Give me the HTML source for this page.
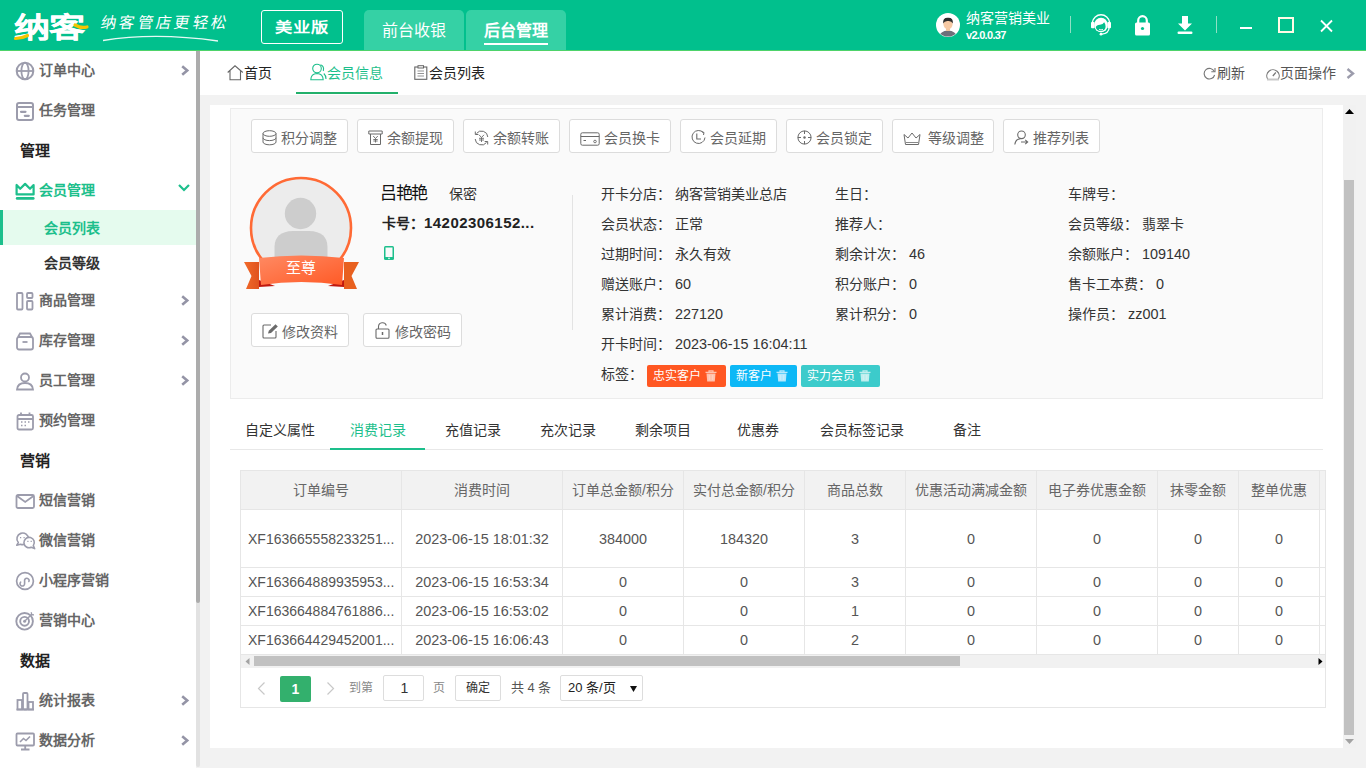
<!DOCTYPE html>
<html lang="zh-CN"><head><meta charset="utf-8">
<style>
*{box-sizing:border-box;margin:0;padding:0}
html,body{width:1366px;height:768px;overflow:hidden}
body{position:relative;background:#f2f2f2;font-family:"Liberation Sans",sans-serif;font-size:14px;color:#333}
.a{position:absolute;white-space:nowrap}
svg{display:block}
/* header */
#hdr{z-index:5;position:absolute;left:0;top:0;width:1366px;height:51px;background:#01c08d;border-bottom:1px solid #4ed36a}
/* sidebar */
#side{position:absolute;left:0;top:0;width:196px;height:768px;background:#fff}
#sbar{position:absolute;left:196px;top:51px;width:4px;height:716px;background:#e2e2e2;border-radius:2px}
.si{position:absolute;left:0;width:196px;height:40px}
.si .t{position:absolute;left:39px;top:10px;line-height:20px;font-size:14px;font-weight:bold;color:#666}
.si .ic{position:absolute;left:15px;top:11px}
.si .ch{position:absolute;left:179px;top:14px}
.sh{position:absolute;left:20px;font-size:15px;font-weight:bold;color:#222;line-height:20px}
/* tabbar */
#tabbar{position:absolute;left:200px;top:51px;width:1166px;height:44px;background:#fff}
/* panel */
#panel{position:absolute;left:210px;top:105px;width:1133px;height:643px;background:#fff}
#vscroll{position:absolute;left:1343px;top:105px;width:13px;height:643px;background:#f1f1f1}
#info{position:absolute;left:230px;top:108px;width:1093px;height:291px;background:#fafafa;border:1px solid #ececec}
.btn{position:absolute;top:119px;height:34px;background:#fff;border:1px solid #dcdcdc;border-radius:3px}
.btn .ic{position:absolute;left:10px;top:10px}
.btn .t{position:absolute;top:7px;line-height:20px;color:#666;font-size:14px}
.lb{position:absolute;line-height:20px;color:#333;font-size:14px;white-space:nowrap}
.tag{position:absolute;top:365px;height:22px;border-radius:2px;color:#fff;font-size:12px;line-height:22px}
.tag .t{position:absolute;left:6px;top:0}
.tag svg{position:absolute;top:4px}
.st{position:absolute;top:420px;line-height:20px;font-size:14px;color:#333}
/* table */
#tbl{position:absolute;left:240px;top:470px;width:1086px;height:238px;border:1px solid #e6e6e6;background:#fff}
.th{position:absolute;top:0;height:39px;background:#f2f2f2;border-right:1px solid #e6e6e6;border-bottom:1px solid #e6e6e6;color:#666;line-height:39px;text-align:center}
.td{position:absolute;border-right:1px solid #e6e6e6;border-bottom:1px solid #e6e6e6;color:#555;text-align:center;overflow:hidden;font-size:14.4px}
</style></head><body>
<div id="hdr">
<div class="a" style="left:14px;top:5px;font-size:34px;line-height:44px;font-weight:bold;color:#fff;letter-spacing:-1px;font-family:'Liberation Serif',serif;-webkit-text-stroke:0.3px #fff;transform:scale(1.06,0.84);transform-origin:0 36px">纳客</div>
<svg class="a" style="left:14px;top:27px;overflow:visible" width="78" height="16"><path d="M1.5 11.5 Q8 11.5 13.5 8.5" stroke="#f5c400" stroke-width="3.2" fill="none" stroke-linecap="round"/><path d="M61 -2 Q67 1.5 73 0" stroke="#f5c400" stroke-width="3.2" fill="none" stroke-linecap="round"/></svg>
<div class="a" style="left:101px;top:11px;font-size:15.5px;line-height:24px;color:#fff;letter-spacing:2.3px;transform:skewX(-10deg)">纳客管店更轻松</div>
<svg class="a" style="left:100px;top:30px" width="125" height="14"><path d="M3 10.5 Q55 2 118 11" stroke="#fff" stroke-width="1.3" fill="none" opacity=".9"/></svg>
<div class="a" style="left:261px;top:10px;width:82px;height:34px;border:1px solid #fff;border-radius:3px;color:#fff;font-weight:bold;font-size:16px;line-height:32px;text-align:center;font-family:'Liberation Serif',serif"><span style="display:inline-block;transform:translateY(1px) scale(1.08,0.85);letter-spacing:0.5px">美业版</span></div>
<div class="a" style="left:364px;top:10px;width:100px;height:40px;background:#35d1a5;border-radius:5px 5px 0 0;color:#fff;font-size:16px;line-height:42px;text-align:center">前台收银</div>
<div class="a" style="left:466px;top:10px;width:100px;height:40px;background:#35d1a5;border-radius:5px 5px 0 0;color:#fff;font-size:16px;font-weight:bold;line-height:42px;text-align:center;font-family:'Liberation Serif',serif">后台管理</div>
<div class="a" style="left:484px;top:43px;width:64px;height:2px;background:#fff"></div>
<svg class="a" style="left:936px;top:13px" width="24" height="24" viewBox="0 0 24 24"><circle cx="12" cy="12" r="12" fill="#fff"/><clipPath id="cav"><circle cx="12" cy="12" r="11.5"/></clipPath><g clip-path="url(#cav)"><path d="M3 24 Q4 18 12 17.5 Q20 18 21 24Z" fill="#6e6f7a"/><rect x="10" y="14" width="4" height="4" fill="#f2c6a0"/><ellipse cx="12" cy="11" rx="4.6" ry="5.2" fill="#f6c9a4"/><path d="M7.2 10.5 Q6.5 4.5 12 4.8 Q17.5 4.5 16.8 10.5 Q15.5 7.6 12 8 Q8.5 7.6 7.2 10.5Z" fill="#2d2d2d"/></g></svg>
<div class="a" style="left:966px;top:8px;font-size:14px;line-height:20px;color:#fff">纳客营销美业</div>
<div class="a" style="left:966px;top:28px;font-size:11px;line-height:15px;color:#fff;font-weight:bold;letter-spacing:-0.7px">v2.0.0.37</div>
<div class="a" style="left:1070px;top:16px;width:1px;height:17px;background:#8fe0c5"></div>
<svg class="a" style="left:1086px;top:10px" width="30" height="30" viewBox="0 0 30 30"><path d="M6.3 12.5 A8.8 9.2 0 0 1 23.7 12.5" stroke="#fff" stroke-width="1.4" fill="none"/><rect x="5" y="12" width="3.6" height="6.3" rx="1" fill="#fff"/><rect x="21.4" y="12" width="3.6" height="6.3" rx="1" fill="#fff"/><ellipse cx="15" cy="15" rx="6.8" ry="7.3" fill="#fff"/><path d="M9.8 17.2 Q10.3 15.3 14 14.8 Q17 14.3 18.2 12.2 Q19.6 13.8 19.6 16.8 Q19.4 20.8 15 21 Q10.2 20.8 9.8 17.2Z" fill="#01c08d"/><path d="M13 19.3 Q15 20.5 17 19.3" stroke="#fff" stroke-width="0.9" fill="none"/><path d="M23.2 17.5 Q22.8 23.5 15.8 24.2" stroke="#fff" stroke-width="1.3" fill="none"/><circle cx="15" cy="24.2" r="1.4" fill="#fff"/></svg>
<svg class="a" style="left:1134px;top:15px" width="17" height="21" viewBox="0 0 17 21"><path d="M4.2 8 V5.5 A4.3 4.3 0 0 1 12.8 5.5 V8" stroke="#fff" stroke-width="2.2" fill="none"/><rect x="1" y="7.5" width="15" height="13" rx="1.5" fill="#fff"/><circle cx="8.5" cy="13.5" r="1.6" fill="#01c08d"/></svg>
<svg class="a" style="left:1177px;top:15px" width="16" height="20" viewBox="0 0 16 20"><path d="M5 1 H11 V8.5 H15 L8 15.5 L1 8.5 H5Z" fill="#fff"/><rect x="0.5" y="16.5" width="15" height="2.5" rx="1.2" fill="#fff"/></svg>
<div class="a" style="left:1216px;top:16px;width:1px;height:17px;background:#8fe0c5"></div>
<div class="a" style="left:1240px;top:27px;width:12px;height:2px;background:#fff"></div>
<div class="a" style="left:1278px;top:17px;width:16px;height:16px;border:2px solid #fffbe6"></div>
<svg class="a" style="left:1320px;top:19px" width="13" height="14" viewBox="0 0 13 14"><path d="M1 1.5 L12 12.5 M12 1.5 L1 12.5" stroke="#fff" stroke-width="1.8"/></svg>
</div>
<div id="side">
<div class="a" style="left:15px;top:61px"><svg width="20" height="20" viewBox="0 0 20 20"><circle cx="10" cy="10" r="8.3" stroke="#9c9cac" stroke-width="2" fill="none"/><ellipse cx="10" cy="10" rx="3.6" ry="8.3" stroke="#9c9cac" stroke-width="1.8" fill="none"/><path d="M2 10 H18" stroke="#9c9cac" stroke-width="1.8"/></svg></div>
<div class="a" style="left:39px;top:61px;font-size:14px;line-height:20px;font-weight:bold;color:#666;font-family:'Liberation Serif',serif">订单中心</div>
<svg class="a" style="left:180px;top:65px" width="10" height="11" viewBox="0 0 10 11"><path d="M2.2 1.3 L7.2 5.5 L2.2 9.7" stroke="#9494a6" stroke-width="2.6" fill="none"/></svg>
<div class="a" style="left:15px;top:101px"><svg width="20" height="20" viewBox="0 0 20 20"><rect x="2" y="2" width="16" height="17" rx="2" stroke="#9c9cac" stroke-width="2" fill="none"/><path d="M2 6 H18" stroke="#9c9cac" stroke-width="2"/><path d="M6 10.8 H10.5 M9.8 14.8 H13.8" stroke="#9c9cac" stroke-width="2.2" stroke-linecap="round"/></svg></div>
<div class="a" style="left:39px;top:101px;font-size:14px;line-height:20px;font-weight:bold;color:#666;font-family:'Liberation Serif',serif">任务管理</div>
<div class="a" style="left:20px;top:141px;font-size:15px;line-height:20px;font-weight:bold;color:#222;font-family:'Liberation Serif',serif">管理</div>
<div class="a" style="left:15px;top:182px"><svg width="20" height="20" viewBox="0 0 20 20"><path d="M1.6 3 V12.4 H18.6 V3 L15 6.8 L10.1 1.9 L5.2 6.8 Z" stroke="#1dbf8c" stroke-width="2.2" fill="none" stroke-linejoin="round"/><rect x="0.8" y="15" width="18.8" height="2.8" rx="1.4" fill="#1dbf8c"/></svg></div>
<div class="a" style="left:39px;top:181px;font-size:14px;line-height:20px;font-weight:bold;color:#1dbf8c;font-family:'Liberation Serif',serif">会员管理</div>
<div class="a" style="left:0;top:210px;width:196px;height:35px;background:#e5fbee"></div><div class="a" style="left:0;top:210px;width:3px;height:35px;background:#1dbf8c"></div>
<div class="a" style="left:44px;top:219px;font-size:14px;line-height:20px;font-weight:bold;color:#1dbf8c;font-family:'Liberation Serif',serif">会员列表</div>
<div class="a" style="left:44px;top:254px;font-size:14px;line-height:20px;font-weight:bold;color:#333;font-family:'Liberation Serif',serif">会员等级</div>
<div class="a" style="left:15px;top:291px"><svg width="20" height="20" viewBox="0 0 20 20"><rect x="2" y="2" width="5.5" height="16.5" rx="1" stroke="#9c9cac" stroke-width="1.8" fill="none"/><rect x="12" y="2" width="5.5" height="5" rx="1" stroke="#9c9cac" stroke-width="1.8" fill="none"/><rect x="12" y="10" width="5.5" height="8.5" rx="1" stroke="#9c9cac" stroke-width="1.8" fill="none"/></svg></div>
<div class="a" style="left:39px;top:291px;font-size:14px;line-height:20px;font-weight:bold;color:#666;font-family:'Liberation Serif',serif">商品管理</div>
<svg class="a" style="left:180px;top:295px" width="10" height="11" viewBox="0 0 10 11"><path d="M2.2 1.3 L7.2 5.5 L2.2 9.7" stroke="#9494a6" stroke-width="2.6" fill="none"/></svg>
<div class="a" style="left:15px;top:331px"><svg width="20" height="20" viewBox="0 0 20 20"><path d="M3 6 L5 2.5 H15 L17 6" stroke="#9c9cac" stroke-width="1.8" fill="none"/><rect x="2" y="6" width="16" height="12.5" rx="2" stroke="#9c9cac" stroke-width="1.8" fill="none"/><path d="M7.5 11 H12.5" stroke="#9c9cac" stroke-width="1.8"/></svg></div>
<div class="a" style="left:39px;top:331px;font-size:14px;line-height:20px;font-weight:bold;color:#666;font-family:'Liberation Serif',serif">库存管理</div>
<svg class="a" style="left:180px;top:335px" width="10" height="11" viewBox="0 0 10 11"><path d="M2.2 1.3 L7.2 5.5 L2.2 9.7" stroke="#9494a6" stroke-width="2.6" fill="none"/></svg>
<div class="a" style="left:15px;top:371px"><svg width="20" height="20" viewBox="0 0 20 20"><circle cx="10" cy="6.5" r="4" stroke="#9c9cac" stroke-width="1.8" fill="none"/><path d="M2 18.5 Q2.5 12 10 12 Q17.5 12 18 18.5Z" stroke="#9c9cac" stroke-width="1.8" fill="none"/></svg></div>
<div class="a" style="left:39px;top:371px;font-size:14px;line-height:20px;font-weight:bold;color:#666;font-family:'Liberation Serif',serif">员工管理</div>
<svg class="a" style="left:180px;top:375px" width="10" height="11" viewBox="0 0 10 11"><path d="M2.2 1.3 L7.2 5.5 L2.2 9.7" stroke="#9494a6" stroke-width="2.6" fill="none"/></svg>
<div class="a" style="left:15px;top:411px"><svg width="20" height="20" viewBox="0 0 20 20"><rect x="2.5" y="4" width="15.5" height="14.5" rx="1.5" stroke="#9c9cac" stroke-width="1.8" fill="none"/><path d="M2.5 8 H18" stroke="#9c9cac" stroke-width="2"/><path d="M6 1.5 V5 M14.5 1.5 V5" stroke="#9c9cac" stroke-width="1.8"/><path d="M6 11 h1.5 M9.5 11 h1.5 M13 11 h1.5 M6 14.5 h1.5 M9.5 14.5 h1.5" stroke="#9c9cac" stroke-width="1.5"/></svg></div>
<div class="a" style="left:39px;top:411px;font-size:14px;line-height:20px;font-weight:bold;color:#666;font-family:'Liberation Serif',serif">预约管理</div>
<div class="a" style="left:20px;top:451px;font-size:15px;line-height:20px;font-weight:bold;color:#222;font-family:'Liberation Serif',serif">营销</div>
<div class="a" style="left:15px;top:491px"><svg width="20" height="20" viewBox="0 0 20 20"><rect x="1.5" y="4" width="17.5" height="13" rx="1.5" stroke="#9c9cac" stroke-width="1.8" fill="none"/><path d="M2 5 L10.2 11 L18.5 5" stroke="#9c9cac" stroke-width="1.8" fill="none"/></svg></div>
<div class="a" style="left:39px;top:491px;font-size:14px;line-height:20px;font-weight:bold;color:#666;font-family:'Liberation Serif',serif">短信营销</div>
<div class="a" style="left:15px;top:531px"><svg width="21" height="20" viewBox="0 0 21 20"><path d="M1.8 14.2 L3.3 11.6 A5.8 5.8 0 1 1 5.5 13.2 Z" stroke="#9c9cac" stroke-width="1.6" fill="#fff" stroke-linejoin="round"/><path d="M5 6.6 h1.2 M8.5 6.6 h1.2" stroke="#9c9cac" stroke-width="1.3"/><path d="M19.6 17.6 L18.3 14.6 A5.2 5.2 0 1 0 16.2 16.3 Z" stroke="#9c9cac" stroke-width="1.6" fill="#fff" stroke-linejoin="round"/><path d="M12.3 10.3 h1.2 M15.6 10.3 h1.2" stroke="#9c9cac" stroke-width="1.3"/></svg></div>
<div class="a" style="left:39px;top:531px;font-size:14px;line-height:20px;font-weight:bold;color:#666;font-family:'Liberation Serif',serif">微信营销</div>
<div class="a" style="left:15px;top:571px"><svg width="20" height="20" viewBox="0 0 20 20"><circle cx="10" cy="10" r="8.4" stroke="#9c9cac" stroke-width="1.7" fill="none"/><path d="M5.6 11.2 A2.3 2.3 0 1 0 9.6 12.6 V8.9 A2.3 2.3 0 1 1 13.9 10.5" stroke="#9c9cac" stroke-width="1.6" fill="none" stroke-linecap="round"/></svg></div>
<div class="a" style="left:39px;top:571px;font-size:14px;line-height:20px;font-weight:bold;color:#666;font-family:'Liberation Serif',serif">小程序营销</div>
<div class="a" style="left:15px;top:611px"><svg width="20" height="20" viewBox="0 0 20 20"><circle cx="9.6" cy="10.3" r="8.3" stroke="#9c9cac" stroke-width="1.9" fill="none"/><circle cx="9.6" cy="10.3" r="4.4" stroke="#9c9cac" stroke-width="1.9" fill="none"/><circle cx="9.6" cy="10.3" r="1.5" fill="#9c9cac"/><path d="M9.6 10.3 L16.8 3.2" stroke="#9c9cac" stroke-width="1.5"/><path d="M15.6 1.2 L17 1.2 L17.2 3 L19 3.2 L19 4.6 L16.2 4.4Z" fill="#9c9cac"/></svg></div>
<div class="a" style="left:39px;top:611px;font-size:14px;line-height:20px;font-weight:bold;color:#666;font-family:'Liberation Serif',serif">营销中心</div>
<div class="a" style="left:20px;top:651px;font-size:15px;line-height:20px;font-weight:bold;color:#222;font-family:'Liberation Serif',serif">数据</div>
<div class="a" style="left:15px;top:691px"><svg width="20" height="20" viewBox="0 0 20 20"><path d="M1.5 18.5 H19" stroke="#9c9cac" stroke-width="1.8"/><rect x="2.5" y="9" width="4.5" height="9.5" stroke="#9c9cac" stroke-width="1.8" fill="none"/><rect x="8" y="2" width="4.5" height="16.5" rx="1" stroke="#9c9cac" stroke-width="1.8" fill="none"/><rect x="13.5" y="11" width="4.5" height="7.5" stroke="#9c9cac" stroke-width="1.8" fill="none"/></svg></div>
<div class="a" style="left:39px;top:691px;font-size:14px;line-height:20px;font-weight:bold;color:#666;font-family:'Liberation Serif',serif">统计报表</div>
<svg class="a" style="left:180px;top:695px" width="10" height="11" viewBox="0 0 10 11"><path d="M2.2 1.3 L7.2 5.5 L2.2 9.7" stroke="#9494a6" stroke-width="2.6" fill="none"/></svg>
<div class="a" style="left:15px;top:731px"><svg width="20" height="20" viewBox="0 0 20 20"><rect x="1.5" y="2.5" width="17.5" height="12" rx="1" stroke="#9c9cac" stroke-width="1.8" fill="none"/><path d="M5 11 L8.5 7.5 L11 9.5 L15 5.5" stroke="#9c9cac" stroke-width="1.6" fill="none"/><path d="M10.2 14.5 V18.5 M6 18.5 H14.5" stroke="#9c9cac" stroke-width="1.8"/></svg></div>
<div class="a" style="left:39px;top:731px;font-size:14px;line-height:20px;font-weight:bold;color:#666;font-family:'Liberation Serif',serif">数据分析</div>
<svg class="a" style="left:180px;top:735px" width="10" height="11" viewBox="0 0 10 11"><path d="M2.2 1.3 L7.2 5.5 L2.2 9.7" stroke="#9494a6" stroke-width="2.6" fill="none"/></svg>
<svg class="a" style="left:178px;top:184px" width="12" height="8" viewBox="0 0 12 8"><path d="M1 1 L6 6 L11 1" stroke="#1dbf8c" stroke-width="2.2" fill="none"/></svg>
</div>
<div id="sbar"><div class="a" style="left:0;top:0;width:4px;height:552px;background:#acacac;border-radius:0 0 2px 2px"></div></div>
<div id="tabbar">
<svg class="a" style="left:27px;top:14px" width="17" height="16" viewBox="0 0 17 16"><path d="M0.7 7.5 L8 0.8 L15.8 7.5 M3 6 V14.8 H13.5 V6" stroke="#666" stroke-width="1.1" fill="none"/></svg>
<div class="a" style="left:44px;top:12px;line-height:20px;color:#222">首页</div>
<svg class="a" style="left:110px;top:12px" width="17" height="18" viewBox="0 0 17 18"><circle cx="7" cy="5.5" r="4.3" stroke="#1dbf8c" stroke-width="1.1" fill="none"/><path d="M0.8 16.8 Q1 10.8 7 10.5 Q13 10.8 13.2 16.8Z" stroke="#1dbf8c" stroke-width="1.1" fill="none"/><path d="M10.5 1.8 Q14.5 3 13.3 8 M13.8 10.5 Q16 12.5 16 16" stroke="#1dbf8c" stroke-width="1.1" fill="none"/></svg>
<div class="a" style="left:127px;top:12px;line-height:20px;color:#1dbf8c">会员信息</div>
<div class="a" style="left:96px;top:41px;width:102px;height:2px;background:#22b06b"></div>
<svg class="a" style="left:214px;top:14px" width="14" height="15" viewBox="0 0 14 15"><rect x="0.8" y="2" width="12" height="12.3" stroke="#666" stroke-width="1.1" fill="none"/><rect x="4" y="0.7" width="5.5" height="2.3" stroke="#666" stroke-width="1" fill="#fff"/><path d="M3.5 6 H10 M3.5 8.5 H10 M3.5 11 H10" stroke="#888" stroke-width="0.9"/></svg>
<div class="a" style="left:229px;top:12px;line-height:20px;color:#222">会员列表</div>
<svg class="a" style="left:1003px;top:16px" width="13" height="13" viewBox="0 0 13 13"><path d="M11.3 4.5 A5.3 5.3 0 1 0 11.6 8" stroke="#777" stroke-width="1.1" fill="none"/><path d="M12 1 V4.8 H8.3" stroke="#777" stroke-width="1.1" fill="none"/></svg>
<div class="a" style="left:1017px;top:12px;line-height:20px;color:#555">刷新</div>
<svg class="a" style="left:1066px;top:16px" width="14" height="14" viewBox="0 0 14 14"><path d="M1.8 12.3 A6.2 6.2 0 1 1 12.2 12.3" stroke="#777" stroke-width="1.1" fill="none"/><path d="M6.8 9 L9.8 5.5" stroke="#777" stroke-width="1.2"/><path d="M1 12.5 H13" stroke="#c8c8c8" stroke-width="2"/></svg>
<div class="a" style="left:1080px;top:12px;line-height:20px;color:#555">页面操作</div>
<svg class="a" style="left:1146px;top:17px" width="9" height="11" viewBox="0 0 9 11"><path d="M1.5 1 L7 5.5 L1.5 10" stroke="#9c9cac" stroke-width="2.4" fill="none"/></svg>
</div>
<div id="panel"></div>
<div id="info"></div>
<div class="btn" style="left:251px;width:97px"><div class="a" style="left:10px;top:10px"><svg width="15" height="16" viewBox="0 0 15 16"><ellipse cx="7.5" cy="3.5" rx="6.5" ry="2.8" stroke="#6a6a6a" stroke-width="1" fill="none"/><path d="M1 3.5 V12 A6.5 2.8 0 0 0 14 12 V3.5 M1 7.8 A6.5 2.8 0 0 0 14 7.8" stroke="#6a6a6a" stroke-width="1" fill="none"/></svg></div><div class="a" style="left:29px;top:8px;line-height:20px;color:#666">积分调整</div></div>
<div class="btn" style="left:357px;width:97px"><div class="a" style="left:10px;top:10px"><svg width="15" height="16" viewBox="0 0 15 16"><path d="M0.8 1 H14.2 V4 H0.8Z M2.5 4 V14.5 H12.5 V4" stroke="#6a6a6a" stroke-width="1" fill="none"/><path d="M5.2 6 L7.5 8.5 L9.8 6 M7.5 8.5 V12.5 M5.3 9.5 H9.7 M5.3 11 H9.7" stroke="#6a6a6a" stroke-width="0.9" fill="none"/></svg></div><div class="a" style="left:29px;top:8px;line-height:20px;color:#666">余额提现</div></div>
<div class="btn" style="left:463px;width:97px"><div class="a" style="left:10px;top:10px"><svg width="15" height="16" viewBox="0 0 15 16"><path d="M13.8 7 A6.3 6.3 0 0 0 2.5 3.5 M1.2 9 A6.3 6.3 0 0 0 12.5 12.5" stroke="#6a6a6a" stroke-width="1" fill="none"/><path d="M1.3 1.5 V4.5 H4.3 M13.7 14.5 V11.5 H10.7" stroke="#6a6a6a" stroke-width="1" fill="none"/><path d="M5 4.8 L7.5 7.5 L10 4.8 M7.5 7.5 V12 M5 8.3 H10 M5 10 H10" stroke="#6a6a6a" stroke-width="0.9" fill="none"/></svg></div><div class="a" style="left:29px;top:8px;line-height:20px;color:#666">余额转账</div></div>
<div class="btn" style="left:569px;width:102px"><div class="a" style="left:10px;top:12px"><svg width="20" height="14" viewBox="0 0 20 14"><rect x="0.8" y="0.8" width="18.4" height="12.4" rx="1.5" stroke="#6a6a6a" stroke-width="1" fill="none"/><path d="M0.8 4.5 H19.2 M3.5 8.5 H6" stroke="#6a6a6a" stroke-width="1"/><circle cx="15" cy="9.5" r="1.3" stroke="#6a6a6a" stroke-width="0.9" fill="none"/></svg></div><div class="a" style="left:34px;top:8px;line-height:20px;color:#666">会员换卡</div></div>
<div class="btn" style="left:680px;width:97px"><div class="a" style="left:10px;top:10px"><svg width="15" height="15" viewBox="0 0 15 15"><path d="M12.5 2.8 A6.5 6.5 0 1 0 14 7.5" stroke="#6a6a6a" stroke-width="1" fill="none"/><path d="M5.8 3.5 V9 H10" stroke="#6a6a6a" stroke-width="1.1" fill="none"/><path d="M10.5 1.5 L13 2.5 L12.5 5" stroke="#6a6a6a" stroke-width="1" fill="none"/></svg></div><div class="a" style="left:29px;top:8px;line-height:20px;color:#666">会员延期</div></div>
<div class="btn" style="left:786px;width:97px"><div class="a" style="left:10px;top:10px"><svg width="15" height="15" viewBox="0 0 15 15"><circle cx="7.5" cy="7.5" r="6.6" stroke="#6a6a6a" stroke-width="1" fill="none"/><path d="M7.5 0.8 V4 M7.5 11 V14.2 M0.8 7.5 H4 M11 7.5 H14.2" stroke="#6a6a6a" stroke-width="1"/><circle cx="7.5" cy="7.5" r="1.2" fill="#6a6a6a"/></svg></div><div class="a" style="left:29px;top:8px;line-height:20px;color:#666">会员锁定</div></div>
<div class="btn" style="left:892px;width:102px"><div class="a" style="left:10px;top:12px"><svg width="18" height="14" viewBox="0 0 18 14"><path d="M1 2.5 L5 6 L9 1 L13 6 L17 2.5 L15.5 12.5 H2.5Z" stroke="#6a6a6a" stroke-width="1" fill="none" stroke-linejoin="round"/><path d="M3 10.5 H15" stroke="#6a6a6a" stroke-width="0.8"/></svg></div><div class="a" style="left:35px;top:8px;line-height:20px;color:#666">等级调整</div></div>
<div class="btn" style="left:1003px;width:97px"><div class="a" style="left:10px;top:10px"><svg width="15" height="15" viewBox="0 0 15 15"><circle cx="7.5" cy="4.8" r="3.8" stroke="#6a6a6a" stroke-width="1.1" fill="none"/><path d="M0.8 14.5 Q1.5 9 6.5 8.8" stroke="#6a6a6a" stroke-width="1.1" fill="none"/><path d="M7 12 H13.5 M11.2 9.8 L13.7 12 L11.2 14.2" stroke="#6a6a6a" stroke-width="1.1" fill="none"/></svg></div><div class="a" style="left:29px;top:8px;line-height:20px;color:#666">推荐列表</div></div>
<svg class="a" style="left:243px;top:175px" width="117" height="116" viewBox="0 0 117 116">
<defs><clipPath id="avc"><circle cx="58" cy="53" r="49.5"/></clipPath>
<linearGradient id="rg" x1="0" y1="0" x2="1" y2="1"><stop offset="0" stop-color="#ff8a63"/><stop offset="1" stop-color="#ff5a26"/></linearGradient>
<linearGradient id="rt" x1="0" y1="0" x2="1" y2="0"><stop offset="0" stop-color="#f26a2a"/><stop offset="1" stop-color="#e0531e"/></linearGradient></defs>
<circle cx="58" cy="53" r="50" fill="#ececec" stroke="#ff6a35" stroke-width="2.6"/>
<g clip-path="url(#avc)"><circle cx="57.5" cy="38.5" r="15.7" fill="#cdcdcd"/><path d="M31.5 85 V72 Q31.5 56.5 50 56 H66 Q84.5 56.5 84.5 72 V85Z" fill="#cdcdcd"/></g>
<path d="M1 87 L16 87 L16 114 L3 114 L8.5 101Z" fill="url(#rt)"/>
<path d="M116 87 L101 87 L101 114 L114 114 L108.5 101Z" fill="#e8601f"/>
<path d="M16 105 L32 111 L16 112Z" fill="#c0180f"/>
<path d="M101 105 L85 111 L101 112Z" fill="#c0180f"/>
<path d="M16 83 Q58 78 101 83 L99 110 Q58 104 18 110Z" fill="url(#rg)"/>
</svg>
<div class="a" style="left:286px;top:258px;font-size:15px;line-height:20px;color:#fff">至尊</div>
<div class="lb" style="left:380px;top:184px;font-size:17px;line-height:20px;color:#111;letter-spacing:-1.4px">吕艳艳</div>
<div class="lb" style="left:449px;top:184px;color:#333">保密</div>
<div class="lb" style="left:382px;top:213px;font-size:15px;color:#222;font-weight:bold"><span style="font-family:'Liberation Serif',serif;font-size:14px">卡号：</span><span style="letter-spacing:0.45px">14202306152...</span></div>
<svg class="a" style="left:384px;top:246px" width="10" height="14" viewBox="0 0 10 14"><rect x="0" y="0" width="10" height="14" rx="1.5" fill="#1dbf8c"/><rect x="1.5" y="1.5" width="7" height="9.5" fill="#fafafa"/><circle cx="5" cy="12.4" r="0.8" fill="#fafafa"/></svg>
<div class="a" style="left:572px;top:195px;width:1px;height:135px;background:#e3e3e3"></div>
<div class="btn" style="left:251px;top:313px;width:98px;height:34px"><svg class="a" style="left:10px;top:9px" width="17" height="16" viewBox="0 0 17 16"><path d="M9 2 H2 A1 1 0 0 0 1 3 V14 A1 1 0 0 0 2 15 H13 A1 1 0 0 0 14 14 V8" stroke="#6a6a6a" stroke-width="1.1" fill="none"/><path d="M6 10.5 L6.8 7.8 L13.5 1.2 L15.8 3.5 L9 10 Z" fill="#6a6a6a"/></svg><div class="a" style="left:30px;top:8px;line-height:20px;color:#666">修改资料</div></div>
<div class="btn" style="left:363px;top:313px;width:99px;height:34px"><svg class="a" style="left:11px;top:8px" width="15" height="17" viewBox="0 0 15 17"><path d="M3.5 7 V4.5 A4 4 0 0 1 11.3 3.5" stroke="#6a6a6a" stroke-width="1.1" fill="none"/><rect x="1" y="7" width="13" height="9.3" rx="1" stroke="#6a6a6a" stroke-width="1.1" fill="none"/><path d="M7.5 10 V13" stroke="#6a6a6a" stroke-width="1.5"/></svg><div class="a" style="left:31px;top:8px;line-height:20px;color:#666">修改密码</div></div>
<div class="lb" style="left:601px;top:184px;color:#333">开卡分店：<span style="margin-left:4px">纳客营销美业总店</span></div>
<div class="lb" style="left:835px;top:184px;color:#333">生日：<span style="margin-left:4px"></span></div>
<div class="lb" style="left:1068px;top:184px;color:#333">车牌号：<span style="margin-left:4px"></span></div>
<div class="lb" style="left:601px;top:214px;color:#333">会员状态：<span style="margin-left:4px">正常</span></div>
<div class="lb" style="left:835px;top:214px;color:#333">推荐人：<span style="margin-left:4px"></span></div>
<div class="lb" style="left:1068px;top:214px;color:#333">会员等级：<span style="margin-left:4px">翡翠卡</span></div>
<div class="lb" style="left:601px;top:244px;color:#333">过期时间：<span style="margin-left:4px">永久有效</span></div>
<div class="lb" style="left:835px;top:244px;color:#333">剩余计次：<span style="margin-left:4px;font-size:14.4px">46</span></div>
<div class="lb" style="left:1068px;top:244px;color:#333">余额账户：<span style="margin-left:4px;font-size:14.4px">109140</span></div>
<div class="lb" style="left:601px;top:274px;color:#333">赠送账户：<span style="margin-left:4px;font-size:14.4px">60</span></div>
<div class="lb" style="left:835px;top:274px;color:#333">积分账户：<span style="margin-left:4px;font-size:14.4px">0</span></div>
<div class="lb" style="left:1068px;top:274px;color:#333">售卡工本费：<span style="margin-left:4px;font-size:14.4px">0</span></div>
<div class="lb" style="left:601px;top:304px;color:#333">累计消费：<span style="margin-left:4px;font-size:14.4px">227120</span></div>
<div class="lb" style="left:835px;top:304px;color:#333">累计积分：<span style="margin-left:4px;font-size:14.4px">0</span></div>
<div class="lb" style="left:1068px;top:304px;color:#333">操作员：<span style="margin-left:4px;font-size:14.4px">zz001</span></div>
<div class="lb" style="left:601px;top:334px;color:#333">开卡时间：<span style="margin-left:4px;font-size:14.4px">2023-06-15 16:04:11</span></div>
<div class="lb" style="left:601px;top:364px;color:#333">标签：</div>
<div class="tag" style="left:647px;width:79px;background:#ff5722"><div class="t">忠实客户</div><div class="a" style="left:58px;top:1px"><svg width="12" height="12" viewBox="0 0 12 12"><path d="M0.5 2.3 H11.5 M4 2.3 V0.8 H8 V2.3" stroke="#ffc2ad" stroke-width="1.2" fill="none"/><path d="M1.5 3.5 H10.5 L9.8 11.5 H2.2Z" fill="#ffc2ad"/><path d="M4.3 5 V10 M7.7 5 V10" stroke="#fff" stroke-opacity=".35" stroke-width="0.8"/></svg></div></div>
<div class="tag" style="left:730px;width:67px;background:#0db8f6"><div class="t">新客户</div><div class="a" style="left:46px;top:1px"><svg width="12" height="12" viewBox="0 0 12 12"><path d="M0.5 2.3 H11.5 M4 2.3 V0.8 H8 V2.3" stroke="#b6e8fc" stroke-width="1.2" fill="none"/><path d="M1.5 3.5 H10.5 L9.8 11.5 H2.2Z" fill="#b6e8fc"/><path d="M4.3 5 V10 M7.7 5 V10" stroke="#fff" stroke-opacity=".35" stroke-width="0.8"/></svg></div></div>
<div class="tag" style="left:801px;width:79px;background:#3ccbcb"><div class="t">实力会员</div><div class="a" style="left:58px;top:1px"><svg width="12" height="12" viewBox="0 0 12 12"><path d="M0.5 2.3 H11.5 M4 2.3 V0.8 H8 V2.3" stroke="#bfeeee" stroke-width="1.2" fill="none"/><path d="M1.5 3.5 H10.5 L9.8 11.5 H2.2Z" fill="#bfeeee"/><path d="M4.3 5 V10 M7.7 5 V10" stroke="#fff" stroke-opacity=".35" stroke-width="0.8"/></svg></div></div>
<div id="vscroll"><svg class="a" style="left:2px;top:4px" width="9" height="5" viewBox="0 0 9 5"><path d="M0 5 H9 L4.5 0Z" fill="#000"/></svg>
<div class="a" style="left:1px;top:75px;width:10px;height:555px;background:#c1c1c1"></div>
<svg class="a" style="left:2px;top:634px" width="9" height="5" viewBox="0 0 9 5"><path d="M0 0 H9 L4.5 5Z" fill="#a3a3a3"/></svg></div>
<div class="a" style="left:230px;top:420px;width:100px;text-align:center;line-height:20px;color:#333">自定义属性</div>
<div class="a" style="left:330px;top:420px;width:95px;text-align:center;line-height:20px;color:#1dbf8c">消费记录</div>
<div class="a" style="left:425px;top:420px;width:95px;text-align:center;line-height:20px;color:#333">充值记录</div>
<div class="a" style="left:520px;top:420px;width:95px;text-align:center;line-height:20px;color:#333">充次记录</div>
<div class="a" style="left:615px;top:420px;width:95px;text-align:center;line-height:20px;color:#333">剩余项目</div>
<div class="a" style="left:710px;top:420px;width:95px;text-align:center;line-height:20px;color:#333">优惠券</div>
<div class="a" style="left:805px;top:420px;width:114px;text-align:center;line-height:20px;color:#333">会员标签记录</div>
<div class="a" style="left:919px;top:420px;width:95px;text-align:center;line-height:20px;color:#333">备注</div>
<div class="a" style="left:230px;top:449px;width:1093px;height:1px;background:#e8e8e8"></div>
<div class="a" style="left:330px;top:448px;width:95px;height:2px;background:#1dbf8c"></div>
<div id="tbl">
<div class="a" style="left:0;top:0;width:1084px;height:184px;overflow:hidden">
<div class="th" style="left:0px;width:161px">订单编号</div>
<div class="th" style="left:161px;width:161px">消费时间</div>
<div class="th" style="left:322px;width:121px">订单总金额/积分</div>
<div class="th" style="left:443px;width:121px">实付总金额/积分</div>
<div class="th" style="left:564px;width:101px">商品总数</div>
<div class="th" style="left:665px;width:131px">优惠活动满减金额</div>
<div class="th" style="left:796px;width:121px">电子券优惠金额</div>
<div class="th" style="left:917px;width:81px">抹零金额</div>
<div class="th" style="left:998px;width:81px">整单优惠</div>
<div class="th" style="left:1079px;width:121px"></div>
<div class="td" style="left:0px;top:39px;width:161px;height:58px;line-height:58px;text-align:left;padding-left:7px;font-size:14px">XF163665558233251...</div>
<div class="td" style="left:161px;top:39px;width:161px;height:58px;line-height:58px;text-align:center">2023-06-15 18:01:32</div>
<div class="td" style="left:322px;top:39px;width:121px;height:58px;line-height:58px;text-align:center">384000</div>
<div class="td" style="left:443px;top:39px;width:121px;height:58px;line-height:58px;text-align:center">184320</div>
<div class="td" style="left:564px;top:39px;width:101px;height:58px;line-height:58px;text-align:center">3</div>
<div class="td" style="left:665px;top:39px;width:131px;height:58px;line-height:58px;text-align:center">0</div>
<div class="td" style="left:796px;top:39px;width:121px;height:58px;line-height:58px;text-align:center">0</div>
<div class="td" style="left:917px;top:39px;width:81px;height:58px;line-height:58px;text-align:center">0</div>
<div class="td" style="left:998px;top:39px;width:81px;height:58px;line-height:58px;text-align:center">0</div>
<div class="td" style="left:1079px;top:39px;width:121px;height:58px;line-height:58px;text-align:center"></div>
<div class="td" style="left:0px;top:97px;width:161px;height:29px;line-height:29px;text-align:left;padding-left:7px;font-size:14px">XF163664889935953...</div>
<div class="td" style="left:161px;top:97px;width:161px;height:29px;line-height:29px;text-align:center">2023-06-15 16:53:34</div>
<div class="td" style="left:322px;top:97px;width:121px;height:29px;line-height:29px;text-align:center">0</div>
<div class="td" style="left:443px;top:97px;width:121px;height:29px;line-height:29px;text-align:center">0</div>
<div class="td" style="left:564px;top:97px;width:101px;height:29px;line-height:29px;text-align:center">3</div>
<div class="td" style="left:665px;top:97px;width:131px;height:29px;line-height:29px;text-align:center">0</div>
<div class="td" style="left:796px;top:97px;width:121px;height:29px;line-height:29px;text-align:center">0</div>
<div class="td" style="left:917px;top:97px;width:81px;height:29px;line-height:29px;text-align:center">0</div>
<div class="td" style="left:998px;top:97px;width:81px;height:29px;line-height:29px;text-align:center">0</div>
<div class="td" style="left:1079px;top:97px;width:121px;height:29px;line-height:29px;text-align:center"></div>
<div class="td" style="left:0px;top:126px;width:161px;height:29px;line-height:29px;text-align:left;padding-left:7px;font-size:14px">XF163664884761886...</div>
<div class="td" style="left:161px;top:126px;width:161px;height:29px;line-height:29px;text-align:center">2023-06-15 16:53:02</div>
<div class="td" style="left:322px;top:126px;width:121px;height:29px;line-height:29px;text-align:center">0</div>
<div class="td" style="left:443px;top:126px;width:121px;height:29px;line-height:29px;text-align:center">0</div>
<div class="td" style="left:564px;top:126px;width:101px;height:29px;line-height:29px;text-align:center">1</div>
<div class="td" style="left:665px;top:126px;width:131px;height:29px;line-height:29px;text-align:center">0</div>
<div class="td" style="left:796px;top:126px;width:121px;height:29px;line-height:29px;text-align:center">0</div>
<div class="td" style="left:917px;top:126px;width:81px;height:29px;line-height:29px;text-align:center">0</div>
<div class="td" style="left:998px;top:126px;width:81px;height:29px;line-height:29px;text-align:center">0</div>
<div class="td" style="left:1079px;top:126px;width:121px;height:29px;line-height:29px;text-align:center"></div>
<div class="td" style="left:0px;top:155px;width:161px;height:29px;line-height:29px;text-align:left;padding-left:7px;font-size:14px">XF163664429452001...</div>
<div class="td" style="left:161px;top:155px;width:161px;height:29px;line-height:29px;text-align:center">2023-06-15 16:06:43</div>
<div class="td" style="left:322px;top:155px;width:121px;height:29px;line-height:29px;text-align:center">0</div>
<div class="td" style="left:443px;top:155px;width:121px;height:29px;line-height:29px;text-align:center">0</div>
<div class="td" style="left:564px;top:155px;width:101px;height:29px;line-height:29px;text-align:center">2</div>
<div class="td" style="left:665px;top:155px;width:131px;height:29px;line-height:29px;text-align:center">0</div>
<div class="td" style="left:796px;top:155px;width:121px;height:29px;line-height:29px;text-align:center">0</div>
<div class="td" style="left:917px;top:155px;width:81px;height:29px;line-height:29px;text-align:center">0</div>
<div class="td" style="left:998px;top:155px;width:81px;height:29px;line-height:29px;text-align:center">0</div>
<div class="td" style="left:1079px;top:155px;width:121px;height:29px;line-height:29px;text-align:center"></div>
</div>
<div class="a" style="left:0;top:184px;width:1084px;height:13px;background:#f1f1f1"></div>
<svg class="a" style="left:4px;top:187px" width="5" height="7" viewBox="0 0 5 7"><path d="M4.5 0 V7 L0.5 3.5Z" fill="#a3a3a3"/></svg>
<div class="a" style="left:13px;top:185px;width:706px;height:10px;background:#c1c1c1"></div>
<svg class="a" style="left:1077px;top:187px" width="5" height="7" viewBox="0 0 5 7"><path d="M0.5 0 V7 L4.5 3.5Z" fill="#000"/></svg>
<svg class="a" style="left:16px;top:211px" width="9" height="13" viewBox="0 0 9 13"><path d="M7.5 0.5 L1.5 6.5 L7.5 12.5" stroke="#c8c8c8" stroke-width="1.2" fill="none"/></svg>
<div class="a" style="left:39px;top:205px;width:31px;height:26px;background:#33b06d;border-radius:2px;color:#fff;text-align:center;line-height:26px;font-size:14px;font-weight:bold">1</div>
<svg class="a" style="left:85px;top:211px" width="9" height="13" viewBox="0 0 9 13"><path d="M1.5 0.5 L7.5 6.5 L1.5 12.5" stroke="#c8c8c8" stroke-width="1.2" fill="none"/></svg>
<div class="a" style="left:108px;top:207px;font-size:12px;line-height:20px;color:#888">到第</div>
<div class="a" style="left:142px;top:204px;width:41px;height:26px;border:1px solid #ddd;border-radius:2px;text-align:center;line-height:24px;color:#333;font-size:14px;padding-left:2px">1</div>
<div class="a" style="left:192px;top:207px;font-size:12px;line-height:20px;color:#888">页</div>
<div class="a" style="left:214px;top:204px;width:46px;height:26px;border:1px solid #ddd;border-radius:2px;text-align:center;line-height:24px;color:#333;font-size:12px">确定</div>
<div class="a" style="left:270px;top:207px;font-size:13px;line-height:20px;color:#555">共 4 条</div>
<div class="a" style="left:319px;top:204px;width:83px;height:26px;border:1px solid #ddd;border-radius:2px;line-height:24px;color:#222;font-size:13px;padding-left:7px">20 条/页<svg class="a" style="left:69px;top:10px" width="7" height="6" viewBox="0 0 7 6"><path d="M0 0 H7 L3.5 6Z" fill="#111"/></svg></div>
</div>
</body></html>
